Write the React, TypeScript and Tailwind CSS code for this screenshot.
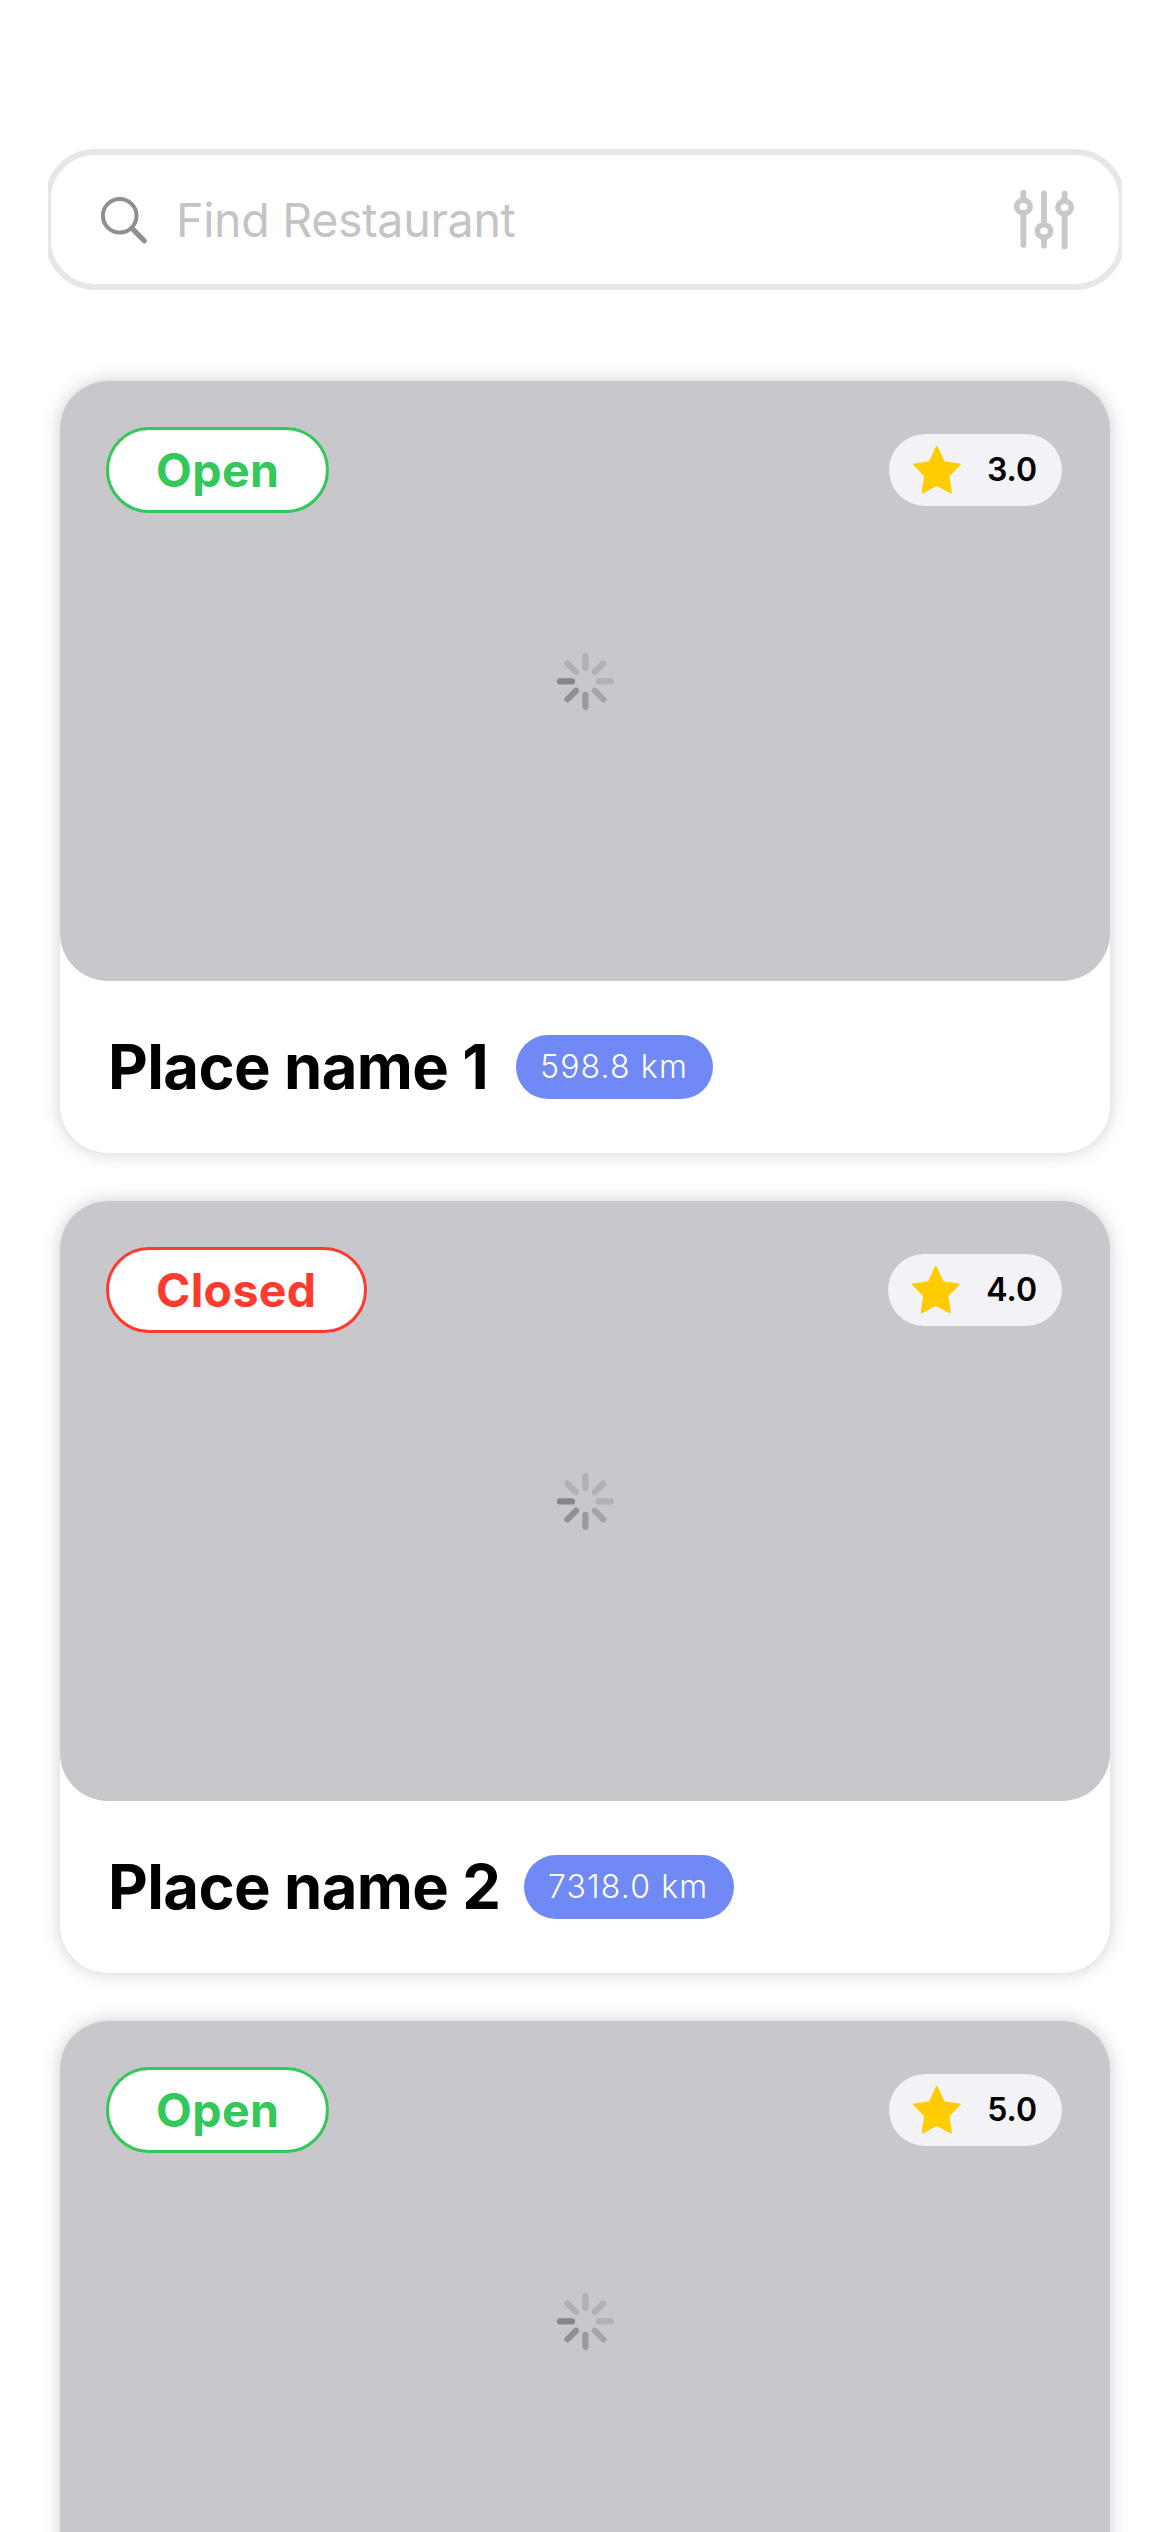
import React from "react";

type Place = {
  id: number;
  open: boolean;
  rating: string;
  badgeWidth: string;
  ratingWidth: string;
  details?: { name: string; distance: string; nameWidth: string; distanceWidth: string };
};

const places: Place[] = [
  {
    id: 1,
    open: true,
    rating: "3.0",
    badgeWidth: "w-[223px]",
    ratingWidth: "w-[173px]",
    details: { name: "Place name 1", distance: "598.8 km", nameWidth: "w-[408px]", distanceWidth: "w-[197px]" },
  },
  {
    id: 2,
    open: false,
    rating: "4.0",
    badgeWidth: "w-[261px]",
    ratingWidth: "w-[174px]",
    details: { name: "Place name 2", distance: "7318.0 km", nameWidth: "w-[416px]", distanceWidth: "w-[210px]" },
  },
  { id: 3, open: true, rating: "5.0", badgeWidth: "w-[223px]", ratingWidth: "w-[173px]" },
];

function SearchIcon() {
  return (
    <svg width="50" height="50" viewBox="0 0 50 50" fill="none" stroke="#8e8e93" strokeLinecap="round">
      <circle cx="22.7" cy="20.8" r="16.8" strokeWidth="4" />
      <path d="M35 33.4L47.2 45.8" strokeWidth="5.2" />
    </svg>
  );
}

function SlidersIcon() {
  return (
    <svg width="60" height="60" viewBox="0 0 60 60" fill="none" stroke="#c7c7cc" strokeLinecap="round">
      <g strokeWidth="5.8">
        <path d="M9.4 2.5V8M9.4 25V54.9" />
        <path d="M30 3.3V34M30 49V55.7" />
        <path d="M50.6 3.6V9M50.6 26V56.4" />
      </g>
      <g strokeWidth="5.6">
        <ellipse cx="9.4" cy="16.4" rx="6.7" ry="6.3" />
        <ellipse cx="30" cy="41" rx="6.7" ry="6.3" />
        <ellipse cx="50.6" cy="17.4" rx="6.7" ry="6.3" />
      </g>
    </svg>
  );
}

function StarIcon() {
  return (
    <svg width="48" height="48" viewBox="0 0 48 48" fill="#ffcc02" stroke="#ffcc02" strokeWidth="2" strokeLinejoin="round">
      <path d="M23.8 1L30.7 16.2L46.8 18.4L35.4 29.8L37.9 46.3L23.8 38.9L9.7 46.3L12.2 29.8L0.9 18.4L16.9 16.2Z" />
    </svg>
  );
}

const petals = ["#b0b0b5", "#b0b0b5", "#b0b0b5", "#a4a4a9", "#99999e", "#8f8f94", "#85858a", "#b0b0b5"];

function Spinner() {
  return (
    <svg width="60" height="60" viewBox="-30.4 -30.4 60 60" strokeWidth="6.2" strokeLinecap="round">
      {petals.map((color, i) => (
        <path key={i} d="M0 -13.4V-25.4" stroke={color} transform={`rotate(${i * 45})`} />
      ))}
    </svg>
  );
}

function PlaceCard({ place }: { place: Place }) {
  const { details } = place;
  return (
    <article className="h-[772px] shrink-0 rounded-[48px] bg-white shadow-[0_0_17px_rgba(60,60,67,0.25)]">
      <div className="flex h-[600px] flex-col rounded-[48px] bg-[#c7c7cc] pt-[46px] pr-12 pl-[46px]">
        <div className="flex items-center justify-between">
          <span
            className={`flex h-[86px] items-center rounded-full border-[3px] bg-white pl-[47px] text-[46.5px] leading-none font-bold ${place.badgeWidth} ${
              place.open ? "border-[#34c759] tracking-[0.4px] text-[#34c759]" : "border-[#ff3b30] tracking-[0.3px] text-[#ff3b30]"
            }`}
          >
            {place.open ? "Open" : "Closed"}
          </span>
          <span className={`flex h-[72px] items-center justify-between rounded-full bg-[#f2f2f7] pr-[25px] pl-6 text-[32px] font-semibold text-black ${place.ratingWidth}`}>
            <StarIcon />
            {place.rating}
          </span>
        </div>
        <div className="mt-[138px] flex justify-center pr-px pl-[3px]">
          <Spinner />
        </div>
      </div>
      {details && (
        <div className="flex h-[172px] items-center pl-12">
          <h2 className={`text-[61.5px] leading-none font-bold tracking-[-0.6px] whitespace-nowrap text-black ${details.nameWidth}`}>{details.name}</h2>
          <span className={`flex h-16 items-center rounded-full bg-[#7189f4] pl-6 text-[32px] font-[350] tracking-[1.15px] whitespace-nowrap text-white ${details.distanceWidth}`}>
            {details.distance}
          </span>
        </div>
      )}
    </article>
  );
}

export default function App() {
  return (
    <main className="flex h-[2532px] w-[1170px] flex-col overflow-hidden bg-white pt-[149px] font-['Inter',sans-serif]">
      <div className="mx-12 shrink-0 overflow-hidden">
        <div className="-mx-[3px] flex h-[141px] items-center rounded-[50px] border-[6px] border-[#e7e7e7] bg-white pr-[45px] pl-[46px]">
          <SearchIcon />
          <span className="ml-[29px] flex-1 pt-px text-[46.5px] leading-none tracking-[-0.3px] text-[#c4c4c6]">Find Restaurant</span>
          <SlidersIcon />
        </div>
      </div>
      <div className="mx-[60px] mt-[91px] flex flex-col gap-12">
        {places.map((place) => (
          <PlaceCard key={place.id} place={place} />
        ))}
      </div>
    </main>
  );
}
